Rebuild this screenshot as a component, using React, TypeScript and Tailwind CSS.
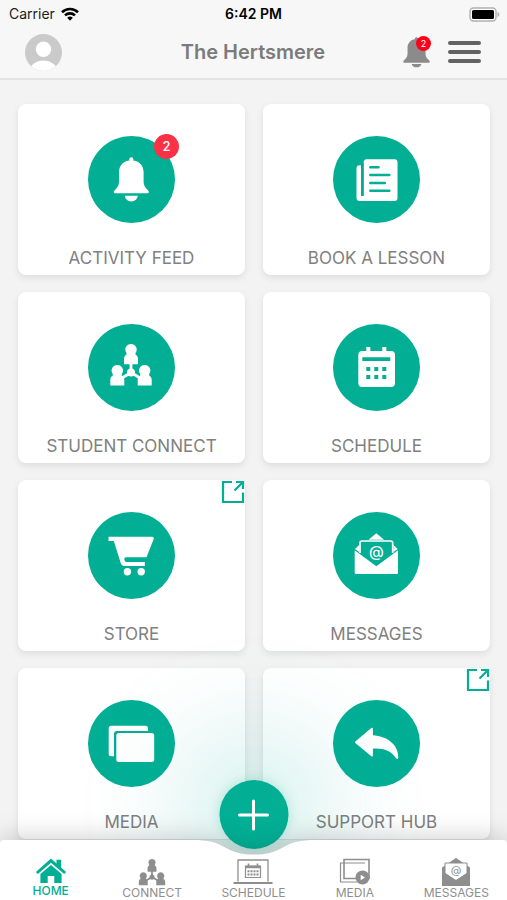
import type { ReactNode } from "react";

const TEAL = "#02ae94";

/* ---------- Tile icons, drawn in the 87px disc ---------- */

function BellIcon() {
  return (
    <g fill="#fff">
      <circle cx="43.3" cy="23.2" r="2" />
      <path d="M43.3 24.2C35.6 24.2 31 29.4 31 36v9.5c0 3.6-1.3 5.7-3.6 8-.9.9-1.6 1.6-1.6 2.4 0 .9.6 1.4 1.6 1.4h31.8c1 0 1.6-.5 1.6-1.4 0-.8-.7-1.5-1.6-2.4-2.3-2.3-3.6-4.4-3.6-8V36c0-6.600-4.600-11.800-12.300-11.800z" />
      <path d="M36.800 59.700h13c-.4 3.300-3 5.700-6.500 5.700s-6.100-2.400-6.500-5.700z" />
    </g>
  );
}

function BookIcon() {
  return (
    <g>
      <path d="M28 29.300h-1.500a3 3 0 0 0-3 3V62a3 3 0 0 0 3 3H40V60H28z" fill="#fff" />
      <rect x="30.700" y="23.300" width="33.800" height="41.700" rx="3" fill="#fff" />
      <g stroke={TEAL} strokeWidth="2.500" strokeLinecap="round">
        <path d="M29.300 28v30.500" />
        <path d="M37.300 31.200h8.200M37.300 39h19M37.300 46.900h14.500M37.300 54.800h19" />
      </g>
    </g>
  );
}

function PeopleShapes() {
  const person =
    "M0-5.600a5.600 5.600 0 0 1 4.500 9v1.500C6.400 6 7 7.500 7 9.500v5.300H-7V9.500C-7 7.500-6.400 6-4.500 4.900V3.400A5.600 5.600 0 0 1 0-5.600z";
  return (
    <g fill="currentColor">
      <path d={person} transform="translate(43 25.500)" />
      <path d={person} transform="translate(29.300 46.600)" />
      <path d={person} transform="translate(56.700 46.600)" />
      <path d="M43 39v9M43 48.500l-9 5.500M43 48.500l9 5.500" stroke="currentColor" strokeWidth="2.800" />
      <circle cx="43" cy="48.500" r="4" />
    </g>
  );
}

function CalendarIcon() {
  return (
    <g>
      <path d="M33.300 23h4v4h12v-4h4v4H58a4 4 0 0 1 4 4v28a4 4 0 0 1-4 4H29.300a4 4 0 0 1-4-4V31a4 4 0 0 1 4-4h4z" fill="#fff" />
      <path
        d="M29.300 33.300h28V37h-28zM33.300 43h4v4h-4zM41.300 43h4v4h-4zM49.300 43h4v4h-4zM33.300 51h4v4h-4zM41.300 51h4v4h-4zM49.300 51h4v4h-4z"
        fill={TEAL}
      />
    </g>
  );
}

function CartIcon() {
  return (
    <g fill="#fff">
      <path d="M20.500 24.700H64c1.400 0 2.200 1 1.700 2.300l-7.200 18.200H38.200c-1.800 0-2.200 1.500-1.600 3 .5 1.300 1.200 1.800 2.400 1.800h17.800v4H37c-2.200 0-3.500-.9-4.200-2.800L25.800 29h-5.300z" />
      <circle cx="39.400" cy="59.700" r="3.700" />
      <circle cx="53.200" cy="59.700" r="3.700" />
    </g>
  );
}

function MailIcon() {
  return (
    <g>
      <path d="M35.500 27.800l7.800-6.500 7.800 6.500z" fill="#fff" />
      <path d="M22 37l4.200-4v7zM64.700 37l-4.200-4v7z" fill="#fff" />
      <path d="M27 41V31a2 2 0 0 1 2-2h28.700a2 2 0 0 1 2 2v10" fill="none" stroke="#fff" strokeWidth="1.700" />
      <path d="M21.700 38.300L43.300 54.300 65 38.300V60.800a1.300 1.300 0 0 1-1.300 1.300H23a1.300 1.300 0 0 1-1.300-1.300z" fill="#fff" />
      <text x="43.300" y="45" textAnchor="middle" fontSize="15" fontWeight="500" fill="#fff">
        @
      </text>
    </g>
  );
}

function FoldersIcon() {
  return (
    <g fill="#fff">
      <path d="M23.200 25.700h34.300a2.500 2.500 0 0 1 2.500 2.500V31H29a3 3 0 0 0-3 3v22.300h-2.800a2.500 2.500 0 0 1-2.500-2.500V28.200a2.500 2.500 0 0 1 2.500-2.500z" />
      <rect x="28.300" y="33" width="37.900" height="29" rx="2.500" />
    </g>
  );
}

function ReplyIcon() {
  return (
    <path
      d="M22.300 41.500L38.300 28c.7-.6 1.600-.3 1.600.7v6.500C53.500 36 65.500 44 65.300 57.600c0 1.500-1.500 1.900-2.400.5C58 50.500 50 48 39.900 48.700v6.800c0 1-.9 1.300-1.600.7L22.300 42.900c-.5-.5-.5-1 0-1.400z"
      fill="#fff"
    />
  );
}

function ExternalIcon() {
  return (
    <svg viewBox="0 0 24 24" className="absolute right-0 top-0 h-6 w-6" fill="none" stroke={TEAL} strokeWidth="2.200" aria-hidden="true">
      <path d="M11 2H2v20h20V12.500" />
      <path d="M13.500 10.500L22 2M15 2h7v7" />
    </svg>
  );
}

/* ---------- Tab bar icons ---------- */

function HomeTab() {
  return (
    <svg viewBox="0 0 32 26" className="h-[26px] w-8" fill="currentColor" aria-hidden="true">
      <path d="M16 .6l5.500 4.800V1.700h4.600v7.800l5 4.400-1.900 2.200L16 4.700 2.800 16.100.9 13.900z" />
      <path d="M16 7l10.600 9v9h-7.300v-7h-6.600v7H5.400v-9z" />
    </svg>
  );
}

function ConnectTab() {
  return (
    <svg viewBox="21 19 44 43" className="h-7 w-[28px]" aria-hidden="true">
      <PeopleShapes />
    </svg>
  );
}

function LaptopTab() {
  return (
    <svg viewBox="0 0 40 28" className="h-7 w-10" fill="none" stroke="currentColor" aria-hidden="true">
      <path d="M5 23.500V2h30v21.500" strokeWidth="1.300" />
      <path d="M.5 25h39" strokeWidth="2" />
      <path d="M12.500 8h15v11.500h-15z" strokeWidth="1.200" />
      <path d="M12.500 9h15" strokeWidth="2.500" />
      <path d="M15.500 5.500v3M24.500 5.500v3" strokeWidth="1.600" />
      <path d="M14.500 13.200h11M14.500 16.500h11" strokeWidth="2" strokeDasharray="2 1" />
    </svg>
  );
}

function MediaTab() {
  return (
    <svg viewBox="0 0 32 28" className="h-7 w-8" fill="none" stroke="currentColor" aria-hidden="true">
      <path d="M26 5H1.500v19H18" strokeWidth="1.200" />
      <path d="M5 1.500h25v19H5z" strokeWidth="1.600" />
      <circle cx="23.500" cy="19.500" r="7" fill="currentColor" stroke="none" />
      <path d="M21.700 16.800v5.400l4.300-2.700z" fill="#fff" stroke="none" />
    </svg>
  );
}

function MailTab() {
  return (
    <svg viewBox="0 0 30 28" className="h-7 w-[30px]" aria-hidden="true">
      <path d="M15 0l14 9.500V28H1V9.500z" fill="currentColor" />
      <path d="M4 5h22v10.500L15 22.500 4 15.500z" fill="#fff" stroke="currentColor" strokeWidth="1" />
      <path d="M1 13l14 9.500L29 13v14a1 1 0 0 1-1 1H2a1 1 0 0 1-1-1z" fill="currentColor" />
      <text x="15" y="16" textAnchor="middle" fontSize="11" fill="currentColor">
        @
      </text>
    </svg>
  );
}

/* ---------- Data ---------- */

type Tile = { label: string; icon: ReactNode; badge?: number; external?: boolean };

const tiles: Tile[] = [
  { label: "ACTIVITY FEED", icon: <BellIcon />, badge: 2 },
  { label: "BOOK A LESSON", icon: <BookIcon /> },
  { label: "STUDENT CONNECT", icon: <PeopleShapes /> },
  { label: "SCHEDULE", icon: <CalendarIcon /> },
  { label: "STORE", icon: <CartIcon />, external: true },
  { label: "MESSAGES", icon: <MailIcon /> },
  { label: "MEDIA", icon: <FoldersIcon /> },
  { label: "SUPPORT HUB", icon: <ReplyIcon />, external: true },
];

const tabs: { label: string; icon: ReactNode; active?: boolean }[] = [
  { label: "HOME", icon: <HomeTab />, active: true },
  { label: "CONNECT", icon: <ConnectTab /> },
  { label: "SCHEDULE", icon: <LaptopTab /> },
  { label: "MEDIA", icon: <MediaTab /> },
  { label: "MESSAGES", icon: <MailTab /> },
];

/* ---------- Sections ---------- */

function StatusBar() {
  return (
    <div className="grid h-7 grid-cols-3 items-center px-[7px] text-sm text-[#1c1c1c]">
      <div className="flex items-center gap-[6px] pl-[2px]">
        <span>Carrier</span>
        <svg viewBox="0 0 18 14" className="h-[14px] w-[18px]" fill="none" stroke="#000" strokeWidth="2.600" aria-hidden="true">
          <path d="M1 5.200a11.500 11.500 0 0 1 16 0" />
          <path d="M4 8.400a7.200 7.200 0 0 1 10 0" />
          <path d="M9 13.700L6.200 10.800a4 4 0 0 1 5.600 0z" fill="#000" stroke="none" />
        </svg>
      </div>
      <span className="text-center font-semibold text-black">6:42 PM</span>
      <svg viewBox="0 0 31 15" className="h-[15px] w-[31px] justify-self-end" aria-hidden="true">
        <rect x="1" y="1" width="26" height="13" rx="3.500" fill="#fff" stroke="#b0b0b0" strokeWidth="1.400" />
        <rect x="3" y="3" width="22" height="9" rx="1.500" fill="#000" />
        <path d="M28.500 5c1.200.4 1.900 1.300 1.900 2.500s-.7 2.100-1.900 2.500z" fill="#b0b0b0" />
      </svg>
    </div>
  );
}

function Header() {
  return (
    <header className="shrink-0 border-b-2 border-[#e3e3e3] bg-[#f7f7f7]">
      <StatusBar />
      <div className="grid h-[50px] grid-cols-[1fr_auto_1fr] items-center pb-[2px] pl-[25px] pr-[26px]">
        <button type="button" aria-label="Profile" className="h-[37px] w-[37px]">
          <svg viewBox="0 0 37 37" className="h-full w-full">
            <clipPath id="avatar">
              <circle cx="18.500" cy="18.500" r="18.500" />
            </clipPath>
            <g clipPath="url(#avatar)">
              <rect width="37" height="37" fill="#cacaca" />
              <circle cx="18.500" cy="15.300" r="7.700" fill="#fff" />
              <ellipse cx="18.500" cy="38" rx="14" ry="11.500" fill="#fff" />
            </g>
          </svg>
        </button>
        <h1 className="text-xl font-semibold text-[#7b7b7b]">The Hertsmere</h1>
        <div className="flex items-center gap-[17px] justify-self-end">
          <button type="button" aria-label="Notifications" className="relative h-8 w-7">
            <svg viewBox="0 0 29 32" className="h-full w-full" fill="#8b8b8b">
              <circle cx="14" cy="2.500" r="1.800" />
              <path d="M14 2.500c-6 0-9.300 4.200-9.300 9.200v5.500c0 3.200-1 4.900-2.800 6.600C.6 25.100.3 25.400.3 26.200c0 .7.600 1 1.300 1h24.800c.7 0 1.300-.3 1.300-1 0-.8-.3-1.100-1.600-2.400-1.800-1.700-2.800-3.400-2.800-6.600v-5.500c0-5-3.300-9.200-9.300-9.200z" />
              <path d="M9 28.400h10c-.5 2.200-2.400 3.500-5 3.500s-4.500-1.300-5-3.500z" />
            </svg>
            <span className="absolute right-0 top-0 flex h-[15px] w-[15px] items-center justify-center rounded-full bg-[#fb0419] text-[9px] leading-none text-white">
              2
            </span>
          </button>
          <button type="button" aria-label="Menu" className="flex w-[33px] flex-col gap-[5px]">
            <span className="h-1 rounded-full bg-[#636363]" />
            <span className="h-1 rounded-full bg-[#636363]" />
            <span className="h-1 rounded-full bg-[#636363]" />
          </button>
        </div>
      </div>
    </header>
  );
}

function TileCard({ tile }: { tile: Tile }) {
  return (
    <button
      type="button"
      className="relative flex h-[171px] flex-col items-center rounded-lg bg-white pt-8 shadow-[0_3px_7px_rgba(0,0,0,0.09)]"
    >
      <span className="relative h-[87px] w-[87px] rounded-full bg-[#02ae94]">
        <svg viewBox="0 0 87 87" className="h-full w-full text-white" aria-hidden="true">
          {tile.icon}
        </svg>
        {tile.badge && (
          <span className="absolute -right-1 -top-[2px] flex h-[25px] w-[25px] items-center justify-center rounded-full bg-[#fc3145] text-[13px] font-medium text-white">
            {tile.badge}
          </span>
        )}
      </span>
      <span className="mt-[23px] text-[17px] leading-6 text-[#808080]">{tile.label}</span>
      {tile.external && <ExternalIcon />}
    </button>
  );
}

function TabBar() {
  return (
    <nav className="relative h-[60px] shrink-0">
      <button
        type="button"
        aria-label="Add"
        className="absolute -top-[60px] left-1/2 flex h-[69px] w-[69px] -translate-x-1/2 items-center justify-center rounded-full bg-[#02ae94] shadow-[0_0_12px_rgba(2,174,148,0.25),0_-8px_110px_40px_rgba(2,174,148,0.2)]"
      >
        <svg viewBox="0 0 32 32" className="h-8 w-8" stroke="#fff" strokeWidth="3" strokeLinecap="round" aria-hidden="true">
          <path d="M16 2v28M2 16h28" />
        </svg>
      </button>
      <div className="absolute inset-0 flex drop-shadow-[0_-3px_12px_rgba(0,0,0,0.18)]">
        <div className="flex-1 rounded-tl bg-white" />
        <svg viewBox="0 0 124 60" className="h-[60px] w-[124px]" fill="#fff" aria-hidden="true">
          <path d="M0 0C16 0 24 2 34 8c10 5 16 6.500 28 6.500S80 13 90 8c10-6 18-8 34-8v60H0z" />
        </svg>
        <div className="flex-1 rounded-tr bg-white" />
      </div>
      <ul className="relative grid h-full grid-cols-5">
        {tabs.map((tab) => (
          <li key={tab.label}>
            <a
              href="#"
              className={
                tab.active
                  ? "flex flex-col items-center pt-[18px] text-xs font-medium leading-[14px] text-[#02ae94]"
                  : "flex flex-col items-center pt-[18px] text-xs leading-[14px] text-[#8e8e8e]"
              }
            >
              {tab.icon}
              <span>{tab.label}</span>
            </a>
          </li>
        ))}
      </ul>
    </nav>
  );
}

export default function App() {
  return (
    <div className="flex h-screen flex-col overflow-hidden bg-[#f3f3f3] font-['Inter','Liberation_Sans',sans-serif]">
      <Header />
      <main className="grid min-h-0 flex-1 grid-cols-2 content-start gap-x-[18px] gap-y-[17px] overflow-hidden pl-[18px] pr-[17px] pt-6">
        {tiles.map((tile) => (
          <TileCard key={tile.label} tile={tile} />
        ))}
      </main>
      <TabBar />
    </div>
  );
}
